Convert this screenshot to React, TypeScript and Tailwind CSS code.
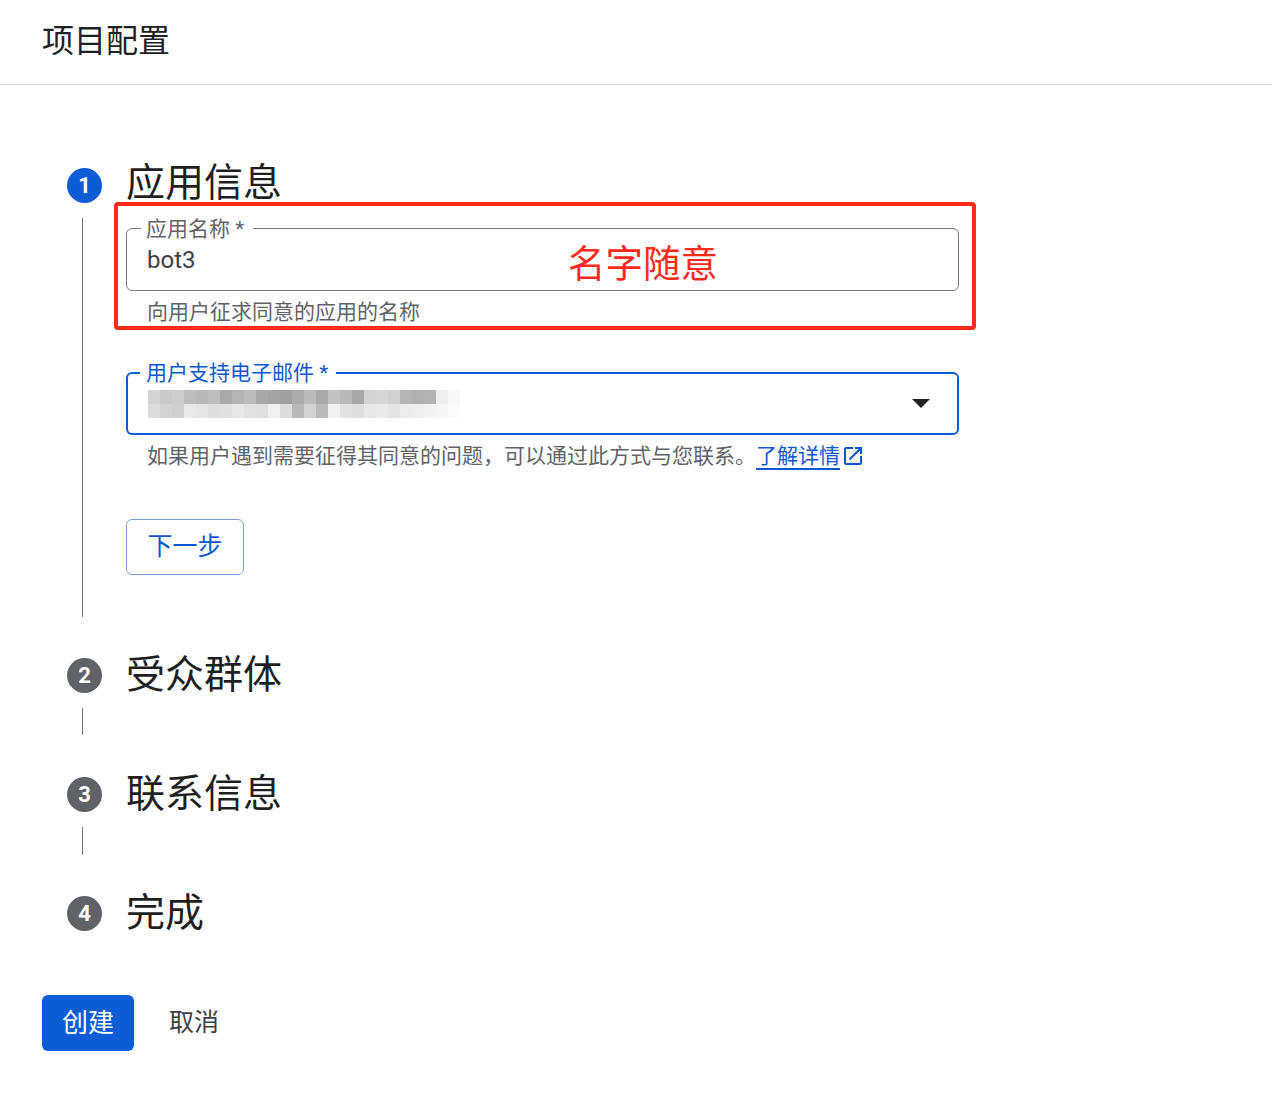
import clsx from 'clsx'

const cn = clsx

const blurTop = [
  '#d4d4d4', '#c9c9c9', '#cdcdcd', '#bdbdbd', '#b8b8b8', '#bdbdbd', '#a9a9a9', '#b4b4b4', '#bcbcbc', '#a8a8a8',
  '#a4a4a4', '#a0a0a0', '#ababab', '#bbbbbb', '#a9a9a9', '#c2c2c2', '#b9b9b9', '#a7a7a7', '#d2d2d2', '#d6d6d6',
  '#d0d0d0', '#b5b5b5', '#b0b0b0', '#b3b3b3', '#eeeeee', '#f8f8f8',
]
const blurBottom = [
  '#dcdcdc', '#d3d3d3', '#cfcfcf', '#e9e9e9', '#e6e6e6', '#dddddd', '#e0e0e0', '#e8e8e8', '#e1e1e1', '#dfdfdf',
  '#f0f0f0', '#dcdcdc', '#b9b9b9', '#d2d2d2', '#bababa', '#f1f1f1', '#e2e2e2', '#dddddd', '#e8e8e8', '#e9e9e9',
  '#e4e4e4', '#ececec', '#eeeeee', '#f3f3f3', '#f6f6f6', '#fbfbfb',
]

const steps = [
  { n: 1, title: '应用信息' },
  { n: 2, title: '受众群体' },
  { n: 3, title: '联系信息' },
  { n: 4, title: '完成' },
]

function StepHeader({ n, title, active }: { n: number; title: string; active?: boolean }) {
  return (
    <div className="flex h-[48px] items-start gap-[24px]">
      <span
        className={cn(
          'flex h-[35px] w-[35px] shrink-0 items-center justify-center rounded-full text-[22px] font-bold leading-none text-white',
          active ? 'mt-[9px] bg-[#0b5cd5]' : 'mt-[7px] bg-[#5f6368]',
        )}
      >
        {n}
      </span>
      <h2 className="text-[39px] leading-[48px] text-[#1f1f1f]">{title}</h2>
    </div>
  )
}

function StepRail({ top, height }: { top: string; height: string }) {
  return (
    <div className="w-[35px] shrink-0">
      <div className={cn('ml-[15px] w-px bg-[#747775]', top, height)} />
    </div>
  )
}

function OpenInNew() {
  return (
    <svg viewBox="0 0 24 24" className="ml-[1px] h-[24px] w-[24px] fill-[#0b57d0]">
      <path d="M19 19H5V5h7V3H5a2 2 0 0 0-2 2v14a2 2 0 0 0 2 2h14c1.1 0 2-.9 2-2v-7h-2v7zM14 3v2h3.59l-9.83 9.83 1.41 1.41L19 6.41V10h2V3h-7z" />
    </svg>
  )
}

function AppInfo() {
  return (
    <div className="ml-[24px] w-[833px] pb-[76px] pt-[21px]">
      <div className="relative">
        <div className="pointer-events-none absolute -bottom-[6px] -left-[12px] -right-[17px] -top-[26px] rounded-[4px] border-4 border-[#ff2a1a]" />
        <div className="relative flex h-[63px] items-center rounded-[6px] border border-[#7b7b7b] pl-[20px]">
          <span className="absolute -top-[14px] left-[14px] bg-white pl-[5px] pr-[9px] text-[21px] leading-[28px] text-[#5f6368]">
            应用名称 *
          </span>
          <span className="text-[24px] leading-[30px] text-[#3c4043]">bot3</span>
          <span className="absolute left-[441px] top-[13px] text-[37.5px] leading-[44px] text-[#ff2a1a]">名字随意</span>
        </div>
        <p className="mt-[9px] pl-[21px] text-[21px] leading-[24px] text-[#5f6368]">向用户征求同意的应用的名称</p>
      </div>

      <div className="relative mt-[48px] flex h-[63px] items-center justify-between rounded-[6px] border-2 border-[#0b5cd5] pl-[20px] pr-[27px]">
        <span className="absolute -top-[15px] left-[12px] bg-white pl-[6px] pr-[8px] text-[21px] leading-[28px] text-[#0b57d0]">
          用户支持电子邮件 *
        </span>
        <div className="flex flex-col">
          <div className="flex">
            {blurTop.map((c, i) => (
              <span key={i} className="h-[14px] w-[12px]" style={{ backgroundColor: c }} />
            ))}
          </div>
          <div className="flex">
            {blurBottom.map((c, i) => (
              <span key={i} className="h-[14px] w-[12px]" style={{ backgroundColor: c }} />
            ))}
          </div>
        </div>
        <span className="h-0 w-0 border-x-[9px] border-t-[9px] border-x-transparent border-t-[#202124]" />
      </div>
      <p className="mt-[9px] flex items-center pl-[21px] text-[21px] leading-[24px] text-[#5f6368]">
        如果用户遇到需要征得其同意的问题，可以通过此方式与您联系。
        <span className="text-[#0b57d0] underline decoration-[1.5px] underline-offset-[5px]">了解详情</span>
        <OpenInNew />
      </p>

      <button className="mt-[51px] h-[56px] w-[118px] rounded-[6px] border border-[#7a9fdc] bg-white text-[25px] text-[#0b57d0]">
        下一步
      </button>
    </div>
  )
}

export default function App() {
  return (
    <div className="min-h-[1093px] bg-white font-['Roboto','Noto_Sans_CJK_SC',sans-serif]">
      <header className="h-[85px] border-b border-[#dadce0] pl-[42px] pt-[21px]">
        <h1 className="text-[32px] leading-[40px] text-[#202124]">项目配置</h1>
      </header>

      <main className="pl-[42px]">
        <div className="mt-[74px] pl-[25px]">
          <StepHeader n={steps[0].n} title={steps[0].title} active />
          <div className="flex">
            <StepRail top="mt-[11px]" height="h-[399px]" />
            <AppInfo />
          </div>

          <StepHeader n={steps[1].n} title={steps[1].title} />
          <div className="flex h-[71px]">
            <StepRail top="mt-[9px]" height="h-[27px]" />
          </div>

          <StepHeader n={steps[2].n} title={steps[2].title} />
          <div className="flex h-[71px]">
            <StepRail top="mt-[9px]" height="h-[28px]" />
          </div>

          <StepHeader n={steps[3].n} title={steps[3].title} />
        </div>

        <div className="mt-[58px] flex items-center gap-[35px]">
          <button className="h-[56px] w-[92px] rounded-[6px] bg-[#0b5cd5] text-[26px] text-white">创建</button>
          <button className="text-[25px] text-[#3c4043]">取消</button>
        </div>
      </main>
    </div>
  )
}
